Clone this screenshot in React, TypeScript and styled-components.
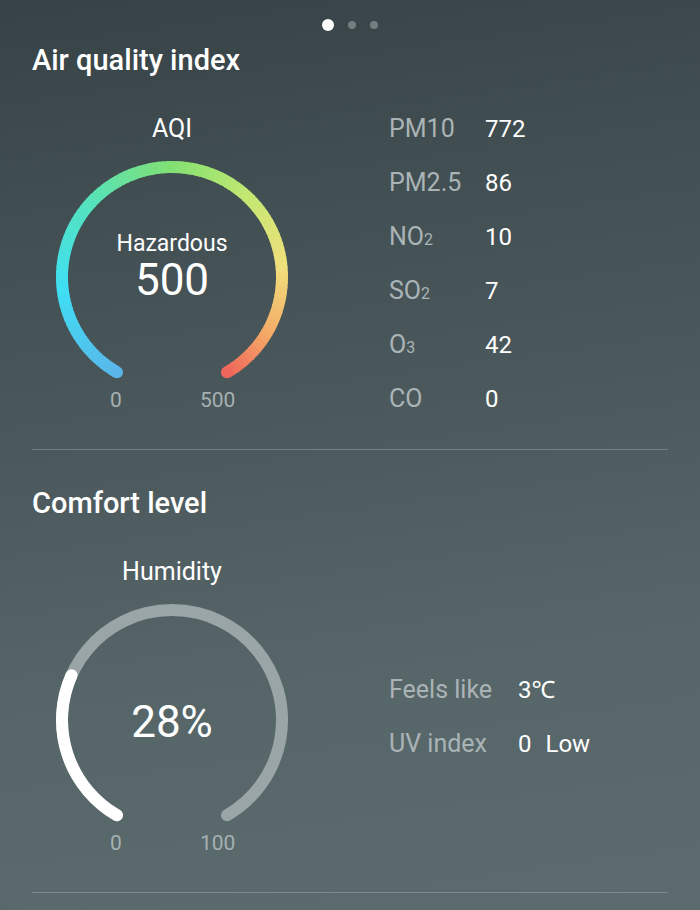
import React from 'react';
import styled, { createGlobalStyle } from 'styled-components';

const GlobalStyle = createGlobalStyle`
  html, body { margin: 0; padding: 0; }
  body {
    background: #4a585c;
    font-family: Roboto, 'Noto Sans', 'DejaVu Sans', sans-serif;
  }
`;

const Page = styled.div`
  width: 700px;
  min-height: 910px;
  box-sizing: border-box;
  padding: 0 32px;
  background: linear-gradient(172deg, #364246 0%, #414e52 22%, #4c5a5e 48%, #566568 70%, #5b6b6e 100%),
    #5b6b6e;
  color: #ffffff;
  overflow: hidden;
`;

const Pager = styled.div`
  height: 44px;
  box-sizing: border-box;
  padding-top: 19px;
  display: flex;
  justify-content: center;
  align-items: flex-start;
`;

const DotRow = styled.div`
  height: 12px;
  display: flex;
  align-items: center;
  gap: 14px;
`;

const Dot = styled.span<{ $active?: boolean }>`
  display: block;
  width: ${(p) => (p.$active ? 12 : 8)}px;
  height: ${(p) => (p.$active ? 12 : 8)}px;
  border-radius: 50%;
  background: ${(p) => (p.$active ? '#ffffff' : 'rgba(255,255,255,0.3)')};
`;

const Section = styled.section<{ $top: number; $bottom: number }>`
  padding-top: ${(p) => p.$top}px;
  padding-bottom: ${(p) => p.$bottom}px;
  border-bottom: 1px solid rgba(255, 255, 255, 0.22);
`;

const Title = styled.h2`
  margin: 0 0 39px;
  font-size: 29px;
  line-height: 32px;
  font-weight: 500;
  color: #ffffff;
`;

const Content = styled.div`
  display: grid;
  grid-template-columns: 280px 1fr;
  column-gap: 77px;
  align-items: start;
`;

const LeftCol = styled.div`
  display: flex;
  flex-direction: column;
  align-items: center;
`;

const GaugeLabel = styled.div`
  font-size: 25px;
  line-height: 28px;
  color: #ffffff;
`;

const GaugeBox = styled.div`
  margin-top: 14px;
  display: grid;
  width: 240px;
  height: 222px;
  & > * {
    grid-area: 1 / 1;
  }
`;

const CenterText = styled.div<{ $top: number }>`
  display: flex;
  flex-direction: column;
  align-items: center;
  padding-top: ${(p) => p.$top}px;
`;

const StatusText = styled.div`
  font-size: 23px;
  line-height: 27px;
`;

const BigValue = styled.div`
  font-size: 44px;
  line-height: 46px;
`;

const ScaleRow = styled.div`
  width: 240px;
  margin-top: 9px;
  display: flex;
  font-size: 21px;
  line-height: 24px;
  color: #a6b0b2;
`;

const ScaleMin = styled.span`
  width: 30px;
  margin-left: 49px;
  text-align: center;
`;

const ScaleMax = styled.span`
  margin-left: 69px;
`;

const RightCol = styled.div<{ $top: number }>`
  margin-top: ${(p) => p.$top}px;
  display: flex;
  flex-direction: column;
  gap: 26px;
`;

const StatRow = styled.div<{ $labelWidth: number }>`
  display: grid;
  grid-template-columns: ${(p) => p.$labelWidth}px auto;
  align-items: baseline;
  height: 28px;
  line-height: 28px;
`;

const StatLabel = styled.span`
  font-size: 25px;
  color: #aab4b6;
  white-space: nowrap;
`;

const StatValue = styled.span`
  font-size: 24px;
  color: #ffffff;
  white-space: nowrap;
`;

const Sub = styled.span`
  font-size: 16px;
  line-height: 1;
`;

const Spaced = styled.span`
  margin-left: 14px;
`;

/* ---------- gauge drawing ---------- */
const CX = 120;
const CY = 120;
const R = 110;
const SW = 12;

const polar = (deg: number) => {
  const a = (deg * Math.PI) / 180;
  return [CX + R * Math.sin(a), CY - R * Math.cos(a)];
};

const arcPath = (from: number, to: number) => {
  const [x1, y1] = polar(from);
  const [x2, y2] = polar(to);
  const large = to - from > 180 ? 1 : 0;
  return `M ${x1.toFixed(2)} ${y1.toFixed(2)} A ${R} ${R} 0 ${large} 1 ${x2.toFixed(2)} ${y2.toFixed(2)}`;
};

const STOPS: [number, string][] = [
  [0, '#5ab6ea'],
  [0.18, '#3fdff4'],
  [0.34, '#55e2bc'],
  [0.5, '#82e072'],
  [0.64, '#c2e872'],
  [0.78, '#f0e07c'],
  [0.9, '#f4ac68'],
  [1, '#ef665a'],
];

const hex = (c: string) => [1, 3, 5].map((i) => parseInt(c.slice(i, i + 2), 16));

const colorAt = (t: number) => {
  for (let i = 0; i < STOPS.length - 1; i++) {
    const [t0, c0] = STOPS[i];
    const [t1, c1] = STOPS[i + 1];
    if (t >= t0 && t <= t1) {
      const k = (t - t0) / (t1 - t0);
      const a = hex(c0);
      const b = hex(c1);
      const m = a.map((v, j) => Math.round(v + (b[j] - v) * k));
      return `rgb(${m[0]},${m[1]},${m[2]})`;
    }
  }
  return STOPS[STOPS.length - 1][1];
};

const START = -150;
const END = 150;

const GradientArc: React.FC = () => {
  const n = 120;
  const step = (END - START) / n;
  const segs = [];
  for (let i = 0; i < n; i++) {
    const a = START + i * step;
    const b = Math.min(END, a + step + 0.6);
    segs.push(
      <path key={i} d={arcPath(a, b)} stroke={colorAt((i + 0.5) / n)} strokeWidth={SW} fill="none" />
    );
  }
  const [sx, sy] = polar(START);
  const [ex, ey] = polar(END);
  return (
    <svg width={240} height={222} viewBox="0 0 240 222">
      {segs}
      <circle cx={sx} cy={sy} r={SW / 2} fill={colorAt(0)} />
      <circle cx={ex} cy={ey} r={SW / 2} fill={colorAt(1)} />
    </svg>
  );
};

const ProgressArc: React.FC<{ value: number; max: number }> = ({ value, max }) => {
  const to = START + ((END - START) * value) / max;
  return (
    <svg width={240} height={222} viewBox="0 0 240 222">
      <path d={arcPath(START, END)} stroke="#9aa5a7" strokeWidth={SW} fill="none" strokeLinecap="round" />
      <path d={arcPath(START, to)} stroke="#ffffff" strokeWidth={SW} fill="none" strokeLinecap="round" />
    </svg>
  );
};

const pollutants: { label: React.ReactNode; value: string }[] = [
  { label: 'PM10', value: '772' },
  { label: 'PM2.5', value: '86' },
  { label: <>NO<Sub>2</Sub></>, value: '10' },
  { label: <>SO<Sub>2</Sub></>, value: '7' },
  { label: <>O<Sub>3</Sub></>, value: '42' },
  { label: 'CO', value: '0' },
];

export default function App() {
  return (
    <>
      <GlobalStyle />
      <Page>
        <Pager>
          <DotRow>
            <Dot $active />
            <Dot />
            <Dot />
          </DotRow>
        </Pager>

        <Section $top={0} $bottom={36}>
          <Title>Air quality index</Title>
          <Content>
            <LeftCol>
              <GaugeLabel>AQI</GaugeLabel>
              <GaugeBox>
                <GradientArc />
                <CenterText $top={73}>
                  <StatusText>Hazardous</StatusText>
                  <BigValue>500</BigValue>
                </CenterText>
              </GaugeBox>
              <ScaleRow>
                <ScaleMin>0</ScaleMin>
                <ScaleMax>500</ScaleMax>
              </ScaleRow>
            </LeftCol>
            <RightCol $top={0}>
              {pollutants.map((p, i) => (
                <StatRow key={i} $labelWidth={96}>
                  <StatLabel>{p.label}</StatLabel>
                  <StatValue>{p.value}</StatValue>
                </StatRow>
              ))}
            </RightCol>
          </Content>
        </Section>

        <Section $top={37} $bottom={37}>
          <Title>Comfort level</Title>
          <Content>
            <LeftCol>
              <GaugeLabel>Humidity</GaugeLabel>
              <GaugeBox>
                <ProgressArc value={28} max={100} />
                <CenterText $top={99}>
                  <BigValue>28%</BigValue>
                </CenterText>
              </GaugeBox>
              <ScaleRow>
                <ScaleMin>0</ScaleMin>
                <ScaleMax>100</ScaleMax>
              </ScaleRow>
            </LeftCol>
            <RightCol $top={118}>
              <StatRow $labelWidth={129}>
                <StatLabel>Feels like</StatLabel>
                <StatValue>3℃</StatValue>
              </StatRow>
              <StatRow $labelWidth={129}>
                <StatLabel>UV index</StatLabel>
                <StatValue>
                  0<Spaced>Low</Spaced>
                </StatValue>
              </StatRow>
            </RightCol>
          </Content>
        </Section>
      </Page>
    </>
  );
}
